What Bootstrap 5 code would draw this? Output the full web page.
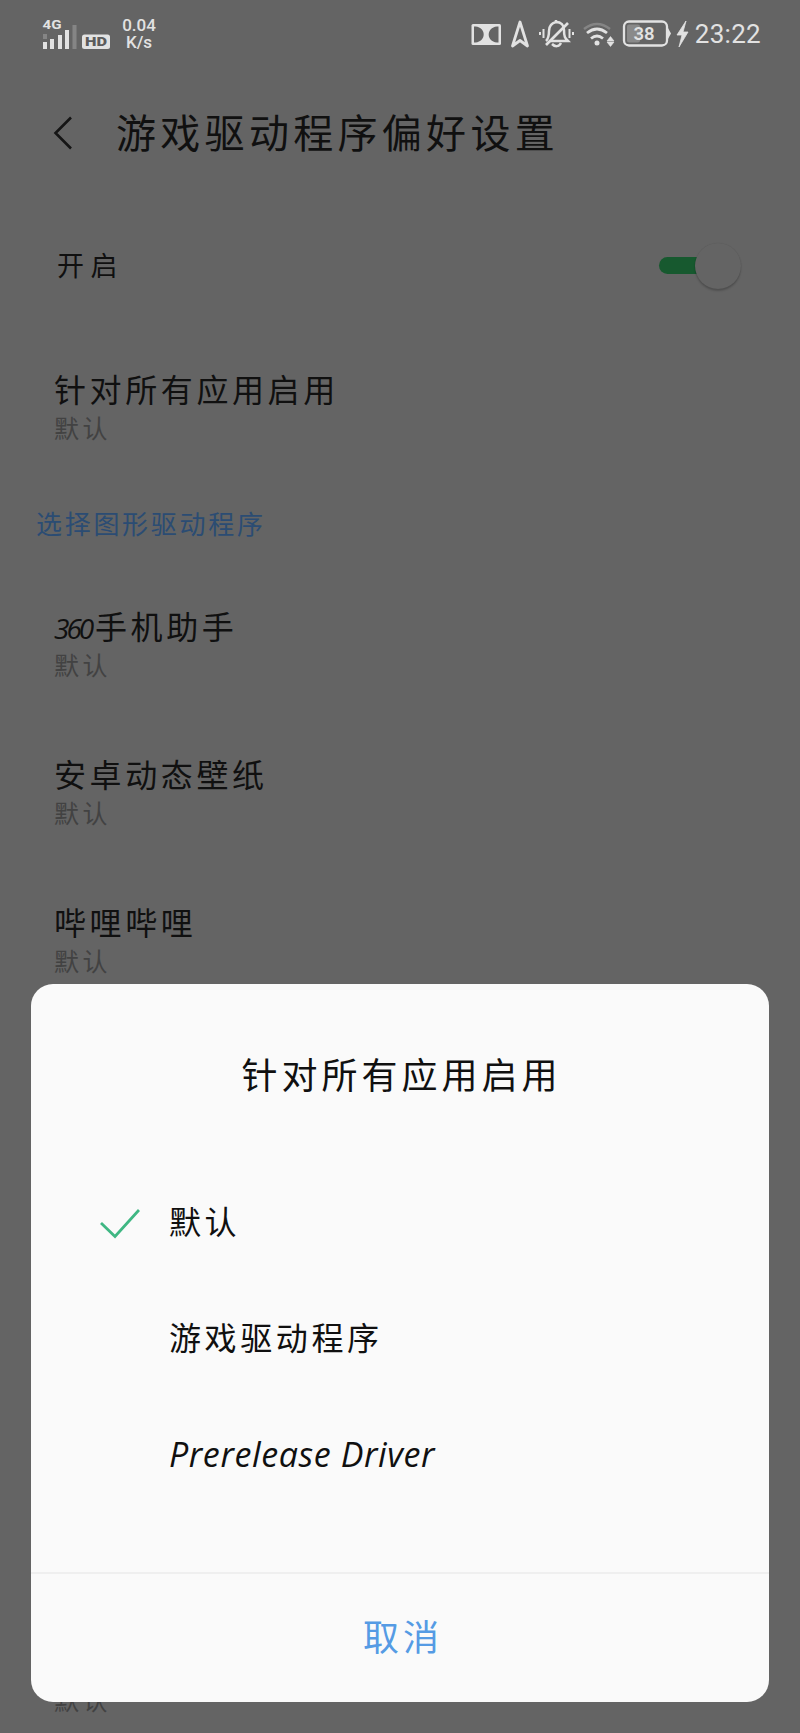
<!DOCTYPE html>
<html lang="zh-CN">
<head>
<meta charset="utf-8">
<meta name="viewport" content="width=device-width, initial-scale=1">
<title>游戏驱动程序偏好设置</title>
<link href="https://cdn.jsdelivr.net/npm/bootstrap@5.3.0/dist/css/bootstrap.min.css" rel="stylesheet">
<style>
  body { background: #646464; color: #101010; font-family: "Noto Sans CJK SC", sans-serif; font-weight: 400; }
  .screen { width: 800px; height: 1733px; }
  .statusbar { height: 68px; padding: 0 39px 0 42px; color: #e2e2e2; font-family: Roboto, sans-serif; }
  .speed { font-size: 17px; font-weight: 500; width: 40px; margin-left: 7px; }
  .speed span { display: block; line-height: 17px; height: 17px; }
  .clock { font-size: 26px; line-height: 30px; font-weight: 400; letter-spacing: .3px; }
  .titlebar { height: 133px; padding: 0 0 3px 53px; }
  .page-title { font-size: 40px; line-height: 60px; letter-spacing: 4.3px; margin: -4px 0 0 43px; font-weight: 400; }
  .entry { height: 148px; padding: 0 54px; }
  .entry-name { font-size: 32px; line-height: 45px; letter-spacing: 3.6px; }
  .entry-name .digits { font-family: "Open Sans", sans-serif; font-style: italic; font-size: 28px; line-height: 32px; letter-spacing: -3px; display: inline-block; width: 41px; }
  .entry-state { font-size: 25px; line-height: 32px; letter-spacing: 3.5px; color: #424242; font-weight: 400; }
  .switch-row { height: 129px; padding: 0 57px 0 57px; }
  .switch-row .entry-name { font-size: 27px; letter-spacing: 6.5px; padding-bottom: 2px; }
  .track { width: 60px; height: 17px; border-radius: 9px; background: #17592f; }
  .knob { width: 46px; height: 46px; right: -22px; top: -14px; background: #646464; box-shadow: 0 2px 2px rgba(0,0,0,.2), 0 0 1px rgba(0,0,0,.15); }
  .section-name { height: 89px; padding-left: 36px; font-size: 26px; letter-spacing: 2.7px; color: #2b4c73; }
  .hidden-rows { height: 672px; }
  .sheet { left: 31px; top: 984px; width: 738px; height: 718px; border-radius: 22px; background: #fafafa; }
  .sheet-title { font-size: 36px; line-height: 52px; letter-spacing: 4px; padding: 63px 0 63px 3px; font-weight: 400; }
  .choice { height: 116px; padding-left: 69px; font-size: 32px; letter-spacing: 3.6px; }
  .choice .tick { width: 40px; margin-right: 29px; }
  .choice .latin { font-family: "Open Sans", sans-serif; font-style: italic; font-size: 34px; letter-spacing: .6px; padding-top: 5px; }
  .cancel { height: 130px; border: 0; border-top: 2px solid #efefef; background: none; color: #559be4; font-size: 36px; letter-spacing: 4px; padding: 0 0 7px 6px; }
</style>
</head>
<body>
<div class="screen position-relative overflow-hidden">
  <header class="statusbar d-flex align-items-center justify-content-between">
    <div class="d-flex align-items-center">
      <svg width="70" height="34" viewBox="0 0 70 34" fill="#e2e2e2">
        <text x="0.500" y="12" font-size="13" font-weight="700" font-family="Roboto" textLength="19" lengthAdjust="spacingAndGlyphs">4G</text>
        <rect x="1" y="25" width="4" height="7"/><rect x="8" y="22" width="4" height="10"/>
        <rect x="16" y="18" width="4" height="14"/><rect x="23" y="13" width="4" height="19"/>
        <rect x="30.500" y="8" width="4" height="24" fill="#858585"/>
        <rect x="1" y="17" width="4" height="5" fill="#858585"/>
        <rect x="40" y="17.500" width="28" height="14.500" rx="2.500"/>
        <text x="43" y="29.300" font-size="13" font-weight="900" font-family="Roboto" fill="#5c5c5c" textLength="22" lengthAdjust="spacingAndGlyphs">HD</text>
      </svg>
      <div class="speed text-center"><span>0.04</span><span>K/s</span></div>
    </div>
    <div class="d-flex align-items-center">
      <svg width="221" height="36" viewBox="470 16 221 36" fill="none" stroke="#e2e2e2" stroke-width="2">
        <rect x="471.500" y="24" width="29.500" height="21" rx="1.500" fill="#e2e2e2" stroke="none"/>
        <path d="M474 26.500h1.500c11 1 11 15 0 16H474zM498.500 26.500H497c-11 1-11 15 0 16h1.500z" fill="#646464" stroke="none"/>
        <path d="M520 22l7.500 24-7.500-5.500-7.500 5.500z" stroke-width="2.800" stroke-linejoin="round"/>
        <path d="M546 41c3-3 3-6 3-10 0-6 3-8 7-9M556 22c5 0 8 3 8 8 0 7 1 8 4 11h-18M556 22v-2M552 44c3 3 7 3 9-1" stroke-width="2.500"/>
        <path d="M546 45l22-22" stroke-width="2.700"/>
        <path d="M543.500 29v9M540 32v3M569.500 29v9M573 32v3"/>
        <path d="M584 29q13-10 26 0" stroke="#858585" stroke-width="2.500"/>
        <path d="M587 33q10-8 20 0M591 38.500q6-5 12 0" stroke-width="2.800"/>
        <circle cx="597" cy="43" r="2.500" fill="#e2e2e2" stroke="none"/>
        <path d="M607 41l3.500-4.500 3.500 4.500zM607 42l3.500 4.500 3.500-4.500z" fill="#e2e2e2" stroke-width=".6"/>
        <rect x="624" y="21.500" width="43" height="24" rx="5" stroke-width="2.300"/>
        <rect x="627" y="24.500" width="13" height="18" rx="2" fill="#8a8a8a" stroke="none"/>
        <path d="M668 28l3 5.500-3 5.500z" fill="#e2e2e2" stroke="none"/>
        <text x="633.500" y="40" font-size="18.500" font-weight="600" font-family="Roboto" fill="#e2e2e2" stroke="none">38</text>
        <path d="M686 21l-9 14h5l-3 12 9-15h-5z" fill="#e2e2e2" stroke="#e2e2e2" stroke-width=".8"/>
      </svg>
      <div class="clock ms-1">23:22</div>
    </div>
  </header>

  <div class="titlebar d-flex align-items-center">
    <svg width="20" height="34" viewBox="0 0 20 34" fill="none" stroke="#151515" stroke-width="2.600"><path d="M18 1.500L2.500 17 18 32.500"/></svg>
    <h1 class="page-title mb-0">游戏驱动程序偏好设置</h1>
  </div>

  <main>
    <div class="switch-row d-flex align-items-center justify-content-between">
      <span class="entry-name">开启</span>
      <div class="track position-relative me-4 flex-shrink-0"><span class="knob position-absolute rounded-circle"></span></div>
    </div>
    <div class="entry d-flex flex-column justify-content-center">
      <div class="entry-name">针对所有应用启用</div><div class="entry-state">默认</div>
    </div>
    <div class="section-name d-flex align-items-center">选择图形驱动程序</div>
    <div class="entry d-flex flex-column justify-content-center">
      <div class="entry-name"><span class="digits">360</span>手机助手</div><div class="entry-state">默认</div>
    </div>
    <div class="entry d-flex flex-column justify-content-center">
      <div class="entry-name">安卓动态壁纸</div><div class="entry-state">默认</div>
    </div>
    <div class="entry d-flex flex-column justify-content-center">
      <div class="entry-name">哔哩哔哩</div><div class="entry-state">默认</div>
    </div>
    <div class="hidden-rows"></div>
    <div class="entry"><div class="entry-state">默认</div></div>
  </main>

  <section class="sheet position-absolute d-flex flex-column" role="dialog">
    <h2 class="sheet-title text-center mb-0">针对所有应用启用</h2>
    <div class="choice d-flex align-items-center">
      <svg class="tick mt-2" height="32" viewBox="0 0 40 32" fill="none" stroke="#3fb783" stroke-width="2.800"><path d="M1 15l14 13.500L39 2"/></svg>默认
    </div>
    <div class="choice d-flex align-items-center"><span class="tick"></span>游戏驱动程序</div>
    <div class="choice d-flex align-items-center"><span class="tick"></span><span class="latin">Prerelease Driver</span></div>
    <button class="cancel w-100 mt-auto" type="button">取消</button>
  </section>
</div>
<script src="https://cdn.jsdelivr.net/npm/bootstrap@5.3.0/dist/js/bootstrap.bundle.min.js"></script>
</body>
</html>
